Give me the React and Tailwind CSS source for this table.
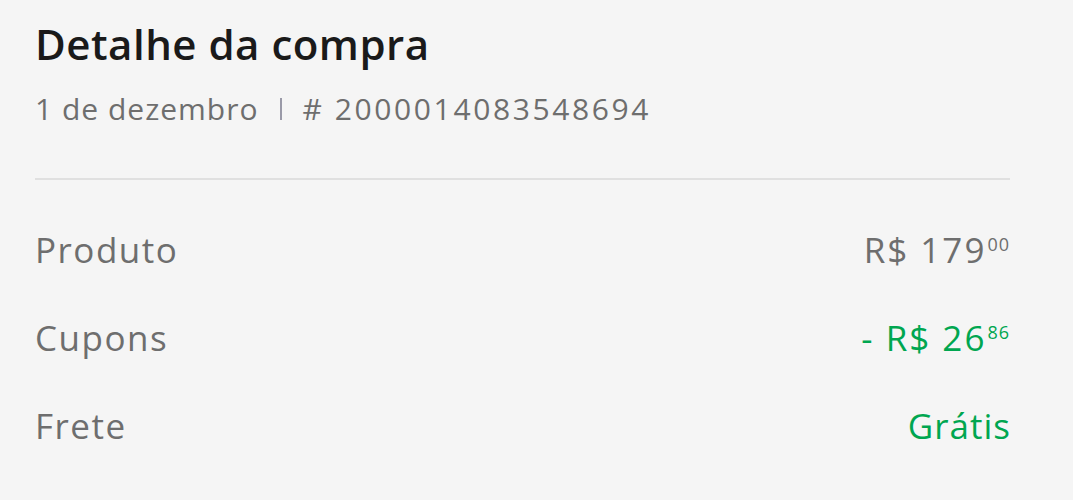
export default function App() {
  const font = { fontFamily: '"Open Sans", "Noto Sans", sans-serif' };
  return (
    <div className="w-[1073px] h-[500px] bg-[#f5f5f5] overflow-hidden" style={font}>
      <div className="pl-[35px] pr-[63px] pt-[20px]">
        <h1 className="text-[42px] leading-[48px] font-semibold text-[#1a1a1a] tracking-[0.5px]">Detalhe da compra</h1>
        <div className="mt-[23px] flex items-center text-[30px] leading-[36px] text-[#6e6e6e]">
          <span className="tracking-[1px]">1 de dezembro</span>
          <span className="ml-[22px] mr-[20px] w-[2px] h-[22px] bg-[#9a9aa8]"></span>
          <span className="tracking-[2.6px]"># 2000014083548694</span>
        </div>
        <div className="mt-[51px] h-[2px] bg-[#e0e0e0]"></div>
        <div className="mt-[50px] flex flex-col gap-[48px] text-[35px] leading-[40px] text-[#6e6e6e] tracking-[1.5px]">
          <div className="flex justify-between">
            <span>Produto</span>
            <span className="flex items-start tracking-[2px]">R$ 179<span className="text-[18px] leading-[18px] mt-[5px] ml-[1px] tracking-[1px]">00</span></span>
          </div>
          <div className="flex justify-between">
            <span>Cupons</span>
            <span className="flex items-start text-[#00a650] tracking-[2px]">- R$ 26<span className="text-[18px] leading-[18px] mt-[5px] ml-[1px] tracking-[1px]">86</span></span>
          </div>
          <div className="flex justify-between">
            <span>Frete</span>
            <span className="text-[#00a650] tracking-[1px] mr-[-1px]">Grátis</span>
          </div>
        </div>
      </div>
    </div>
  );
}
